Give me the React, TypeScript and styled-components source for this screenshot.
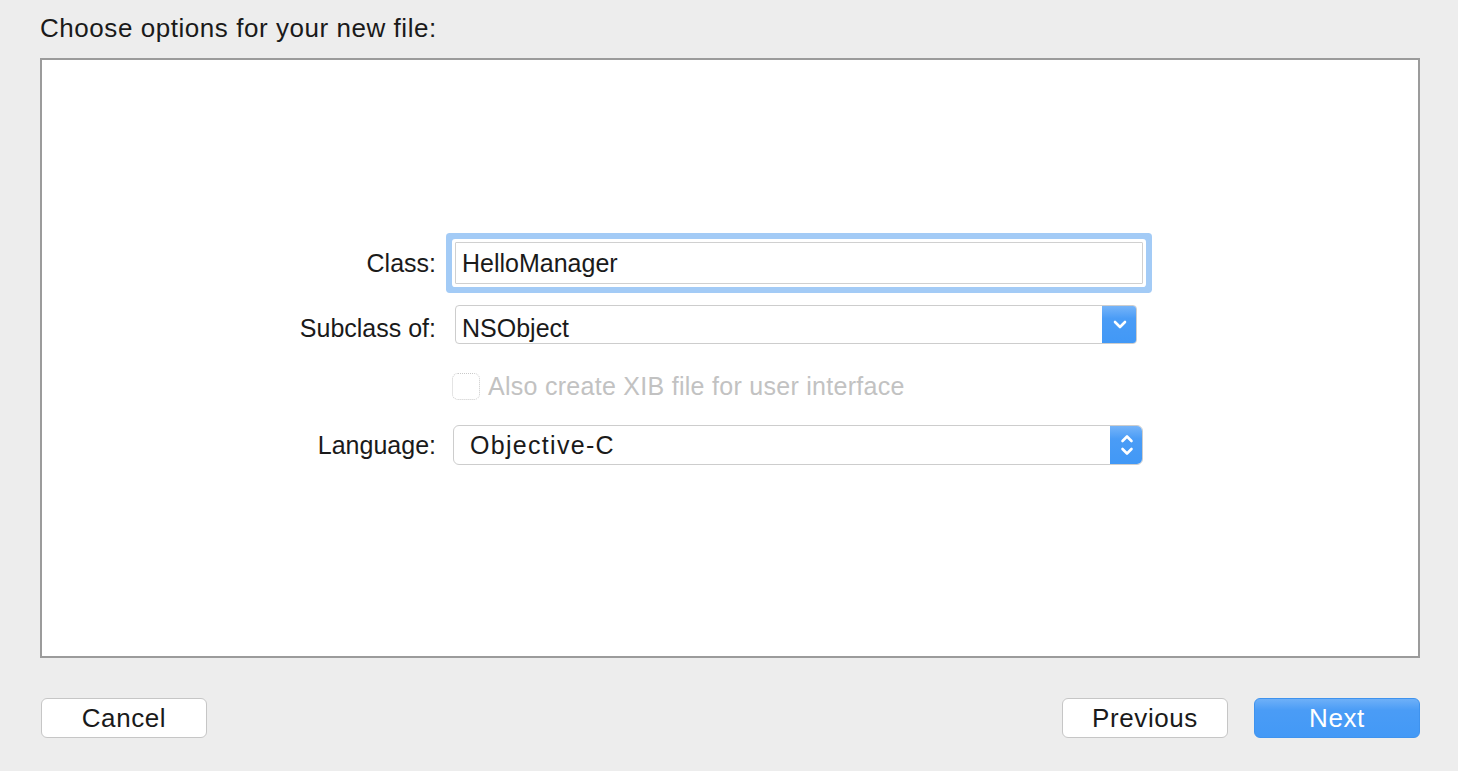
import styled, { createGlobalStyle } from 'styled-components';

const GlobalStyle = createGlobalStyle`
  html, body {
    margin: 0;
    padding: 0;
    background: #ededed;
  }
  body {
    font-family: 'Liberation Sans', Arial, sans-serif;
    color: #1a1a1a;
  }
`;

const Page = styled.div`
  width: 1458px;
  height: 771px;
  box-sizing: border-box;
  padding: 13px 38px 0 40px;
  display: flex;
  flex-direction: column;
`;

const Heading = styled.div`
  font-size: 26px;
  letter-spacing: 0.55px;
  line-height: 30px;
  height: 30px;
  margin-bottom: 15px;
`;

const Panel = styled.div`
  height: 600px;
  box-sizing: border-box;
  border: 2px solid #9b9b9b;
  background: #fff;
  padding-top: 182px;
`;

const Form = styled.div`
  display: flex;
  flex-direction: column;
`;

const Row = styled.div<{ $top: number; $height: number }>`
  display: flex;
  align-items: center;
  height: ${(p) => p.$height}px;
  margin-top: ${(p) => p.$top}px;
`;

const Label = styled.div<{ $shift?: number }>`
  width: 394px;
  text-align: right;
  font-size: 25px;
  margin-right: 17px;
  padding-top: ${(p) => p.$shift ?? 0}px;
  flex: none;
`;

const TextField = styled.div`
  width: 688px;
  height: 42px;
  margin-left: 2px;
  box-sizing: border-box;
  border: 1px solid #d0d0d0;
  background: #fff;
  padding-left: 6px;
  display: flex;
  align-items: center;
  font-size: 25px;
  box-shadow: 0 0 0 3px #fff, 0 0 0 9px #a3cbf6;
  border-radius: 1px;
`;

const Popup = styled.div<{ $width: number; $height: number; $offset: number; $radius: number }>`
  width: ${(p) => p.$width}px;
  height: ${(p) => p.$height}px;
  margin-left: ${(p) => p.$offset}px;
  box-sizing: border-box;
  border: 1px solid #cdcdcd;
  border-radius: ${(p) => p.$radius}px;
  background: #fff;
  display: flex;
  align-items: stretch;
  overflow: hidden;
`;

const PopupValue = styled.div<{ $inset: number; $shift?: number; $spacing?: number }>`
  flex: 1;
  display: flex;
  align-items: center;
  padding-left: ${(p) => p.$inset - 1}px;
  padding-top: ${(p) => p.$shift ?? 0}px;
  letter-spacing: ${(p) => p.$spacing ?? 0}px;
  font-size: 25px;
`;

const Stepper = styled.div<{ $width: number }>`
  width: ${(p) => p.$width}px;
  margin: -1px -1px -1px 0;
  background: linear-gradient(#79b6f9 0%, #4a9cf6 35%, #4198f6 100%);
  border-radius: 0 5px 5px 0;
  display: flex;
  align-items: center;
  justify-content: center;
`;

const CheckRow = styled.div`
  display: flex;
  align-items: center;
  gap: 8px;
  margin-left: -1px;
`;

const Checkbox = styled.div`
  width: 28px;
  height: 27px;
  box-sizing: border-box;
  border: 1px dotted #c9c9c9;
  border-radius: 6px;
  background: #fff;
`;

const CheckLabel = styled.div`
  font-size: 25px;
  letter-spacing: 0.28px;
  color: #c2c2c2;
`;

const Footer = styled.div`
  display: flex;
  align-items: center;
  margin-top: 40px;
  padding-left: 1px;
  gap: 26px;
`;

const Spacer = styled.div`
  flex: 1;
`;

const Button = styled.div<{ $primary?: boolean }>`
  width: 166px;
  height: 40px;
  box-sizing: border-box;
  border-radius: 6px;
  display: flex;
  align-items: center;
  justify-content: center;
  font-size: 26px;
  letter-spacing: 0.6px;
  border: 1px solid ${(p) => (p.$primary ? '#3f93ee' : '#c6c6c6')};
  color: ${(p) => (p.$primary ? '#fff' : '#1a1a1a')};
  background: ${(p) =>
    p.$primary ? 'linear-gradient(#6eb0f8 0%, #4a9cf6 30%, #4399f6 100%)' : '#fff'};
`;

const ChevronDown = () => (
  <svg width="14" height="9" viewBox="0 0 14 9">
    <path d="M2 2 L7 7 L12 2" fill="none" stroke="#fff" strokeWidth="2.6" strokeLinecap="round" strokeLinejoin="round" />
  </svg>
);

const UpDown = () => (
  <svg width="14" height="24" viewBox="0 0 14 24">
    <path d="M2.5 8 L7 3.5 L11.5 8" fill="none" stroke="#fff" strokeWidth="2.6" strokeLinecap="round" strokeLinejoin="round" />
    <path d="M2.5 16 L7 20.5 L11.5 16" fill="none" stroke="#fff" strokeWidth="2.6" strokeLinecap="round" strokeLinejoin="round" />
  </svg>
);

export default function App() {
  return (
    <>
      <GlobalStyle />
      <Page>
        <Heading>Choose options for your new file:</Heading>
        <Panel>
          <Form>
            <Row $top={0} $height={42}>
              <Label>Class:</Label>
              <TextField>HelloManager</TextField>
            </Row>
            <Row $top={21} $height={39}>
              <Label $shift={7}>Subclass of:</Label>
              <Popup $width={682} $height={39} $offset={2} $radius={4}>
                <PopupValue $inset={7} $shift={7}>NSObject</PopupValue>
                <Stepper $width={35}>
                  <ChevronDown />
                </Stepper>
              </Popup>
            </Row>
            <Row $top={29} $height={27}>
              <Label />
              <CheckRow>
                <Checkbox />
                <CheckLabel>Also create XIB file for user interface</CheckLabel>
              </CheckRow>
            </Row>
            <Row $top={25} $height={40}>
              <Label>Language:</Label>
              <Popup $width={690} $height={40} $offset={0} $radius={6}>
                <PopupValue $inset={17} $spacing={1.3}>Objective-C</PopupValue>
                <Stepper $width={33}>
                  <UpDown />
                </Stepper>
              </Popup>
            </Row>
          </Form>
        </Panel>
        <Footer>
          <Button>Cancel</Button>
          <Spacer />
          <Button>Previous</Button>
          <Button $primary>Next</Button>
        </Footer>
      </Page>
    </>
  );
}
